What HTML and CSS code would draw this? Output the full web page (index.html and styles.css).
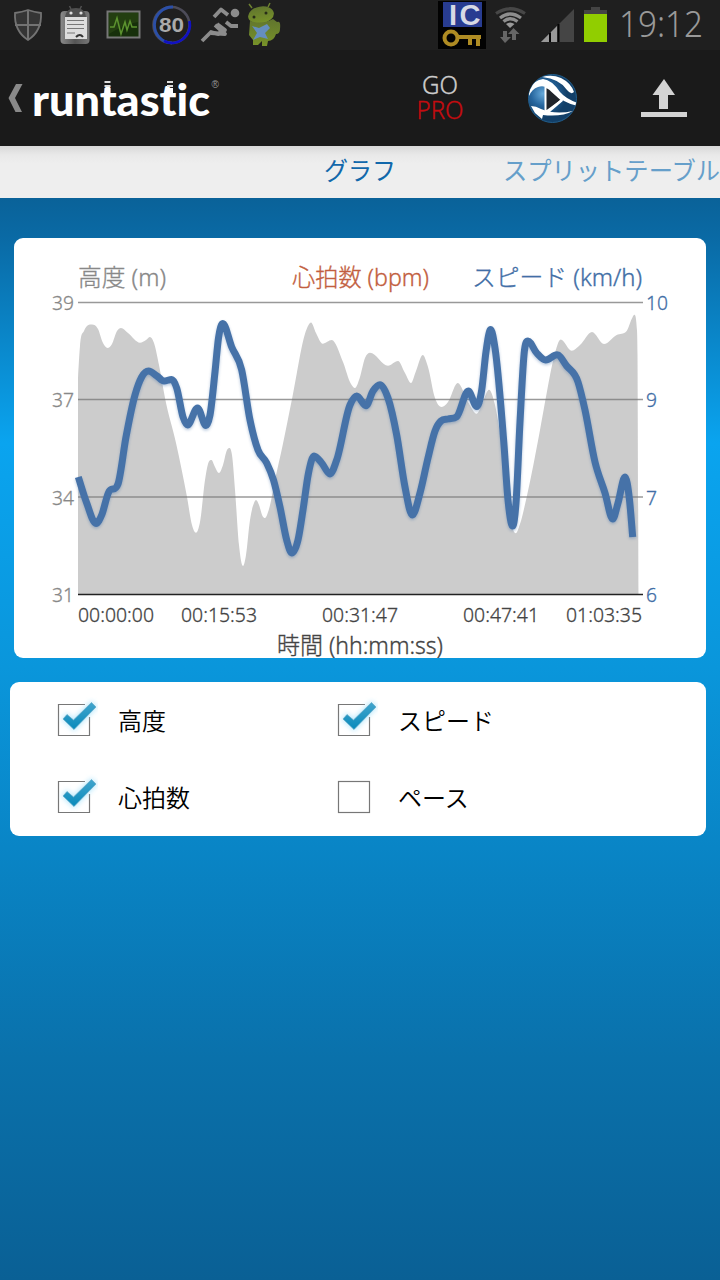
FILE: index.html
```html
<!DOCTYPE html>
<html lang="ja">
<head>
<meta charset="utf-8">
<title>runtastic</title>
<link rel="stylesheet" href="styles.css">
</head>
<body>
<div class="screen">
  <div class="status">
    <svg class="status-icons" width="290" height="50" viewBox="0 0 290 50">
      <defs>
        <linearGradient id="robot" x1="0" y1="0" x2="0" y2="1"><stop offset="0" stop-color="#61752e"/><stop offset="1" stop-color="#789329"/></linearGradient>
        <linearGradient id="metal"><stop offset="0" stop-color="#8a8a8a"/><stop offset=".5" stop-color="#555"/><stop offset="1" stop-color="#777"/></linearGradient>
      </defs>
      <path d="M15 13Q22 12 28 10Q34 12 41 13Q42 31 28 40Q14 31 15 13Z" fill="#353535" stroke="#737373" stroke-width="1.8"/>
      <path d="M28 11V39M15 25H41" stroke="#737373" stroke-width="2"/>
      <rect x="60.500" y="11" width="29" height="33" rx="4" fill="url(#metal)"/>
      <path d="M65 17Q66 8 76 8Q85 8 86 17Z" fill="#505050"/>
      <path d="M71 9L69.500 6M80 9L81.500 6" stroke="#505050" stroke-width="1.500"/>
      <path d="M65 17H87V39H65Z" fill="#ddd"/>
      <circle cx="71" cy="13" r="1.600" fill="#ddd"/><circle cx="81" cy="13" r="1.600" fill="#ddd"/>
      <path d="M67 20.500H84M67 24.500H84M67 28.500H84M67 33H75" stroke="#777"/>
      <path d="M76 37Q80 33 83 37" stroke="#333" stroke-width="2" fill="none"/>
      <rect x="107.500" y="11.500" width="32" height="26" fill="#17300b" stroke="#777" stroke-width="2"/>
      <path d="M109 13H138V22Q125 24 109 34Z" fill="#294414" opacity=".7"/>
      <path d="M110 27H114L117 18L121 34L125 22L127 30L130 21L132 27H137" stroke="#5c932f" stroke-width="1.500" fill="none"/>
      <circle cx="171.500" cy="25" r="18" fill="none" stroke="#4c4b58" stroke-width="2.600"/>
      <path d="M173 7A18 18 0 1 0 172 43" fill="none" stroke="#2b4fa8" stroke-width="2.800"/>
      <path d="M189.500 21A18 18 0 0 1 164 41" fill="none" stroke="#1111c2" stroke-width="2.800"/>
      <text x="171.500" y="32" class="gauge" textLength="25" lengthAdjust="spacingAndGlyphs">80</text>
      <g fill="none" stroke="#8c8c8c" stroke-width="3.800" stroke-linejoin="round">
        <path d="M214 17L221 9.500L228 15"/><path d="M217 24L225 30L218 34L211 32L202 41"/><path d="M215 25L225 34L211 33"/><path d="M226 22L231 26H238"/>
      </g>
      <circle cx="235" cy="13" r="4.300" fill="#8c8c8c"/>
      <g fill="url(#robot)">
        <ellipse cx="261" cy="15" rx="13" ry="8.500" transform="rotate(-10 261 15)"/>
        <path d="M250 21Q262 25 273 19L277 22Q281 20 280 29Q280 34 276 34Q274 41 268 41L267 46H262V41L258 45H253V40L249 35Z"/>
        <path d="M252 8L249 4M268 7L270 3" stroke="#6d8130" stroke-width="1.500"/>
      </g>
      <circle cx="254" cy="17" r="1.500" fill="#272d18"/><circle cx="266" cy="13" r="1.500" fill="#272d18"/>
      <path d="M252 26L259 28L267 24L270 28L265 33L268 39L260 37L253 40L257 33Z" fill="#658ebe"/>
    </svg>
    <svg class="status-icons" width="182" height="50" viewBox="436 0 182 50">
      <rect x="438" y="1" width="48" height="48" fill="#020202"/>
      <rect x="443" y="2" width="39" height="25" fill="#283c91"/>
      <text x="449 459.500" y="25" class="ic">IC</text>
      <g fill="none" stroke="#ae8b23" stroke-width="4"><circle cx="451" cy="38" r="6.500"/><path d="M458 37H481M470 38V45M478 38V46"/></g>
      <g fill="none" stroke="#8d8d8d" stroke-width="3.200">
        <path d="M496 13.500Q510 4 525 13.500" stroke="#474747"/><path d="M500 18Q510 10 521 18"/><path d="M503.500 21.500Q510 16 517.500 21.500"/>
      </g>
      <path d="M506 24Q510 21 514.500 24L510 28Z" fill="#999"/>
      <path d="M503 31H507V37H511L505 43L500 37H503ZM512 40H516V34H519.500L513.500 28L508 34H512Z" fill="#666"/>
      <path d="M541 42L574 9V42Z" fill="#454545"/><path d="M541 42L549 34V42ZM551 42V32L557 26V42Z" fill="#999"/>
      <path d="M550 33V42M558.500 24V42" stroke="#050505" stroke-width="2"/>
      <path d="M584 15V10H591V7H600V10H607V15Z" fill="#444"/><rect x="584" y="14" width="23" height="28" fill="#91ce00"/>
    </svg>
    <svg class="clock" width="102" height="50" viewBox="618 0 102 50"><text x="619" y="37" textLength="84" lengthAdjust="spacingAndGlyphs">19:12</text></svg>
  </div>
  <header class="header">
    <svg class="brand" width="230" height="96" viewBox="0 50 230 96">
      <path d="M16 84H22.500L15 98L22 112H15.500L8.500 98Z" fill="#898989"/>
      <text x="32" y="115.500" class="logo" textLength="178" lengthAdjust="spacingAndGlyphs">runtastic</text>
      <path d="M104.500 82H110.500M104.500 86H110.500M167 82H173M167 86H173" stroke="#ddd" stroke-width="2"/>
      <path d="M104.500 88H110.500V96H104.500ZM167 88H173V96H167Z" fill="#fff"/>
      <text x="211.500" y="88" class="reg">®</text>
    </svg>
    <svg class="actions" width="320" height="96" viewBox="400 50 320 96">
      <defs>
        <radialGradient id="ball" cx=".3" cy=".4"><stop offset="0" stop-color="#65a8d9"/><stop offset=".5" stop-color="#26659d"/><stop offset="1" stop-color="#123f68"/></radialGradient>
        <clipPath id="ballClip"><circle cx="552.500" cy="98.500" r="24"/></clipPath>
      </defs>
      <text x="440" y="94" class="go" textLength="36" lengthAdjust="spacingAndGlyphs">GO</text>
      <text x="440" y="119" class="pro" textLength="47" lengthAdjust="spacingAndGlyphs">PRO</text>
      <circle cx="552.500" cy="98.500" r="24" fill="url(#ball)" stroke="#225e8c"/>
      <g clip-path="url(#ballClip)">
        <path d="M529 91Q533 80 543 79Q552 80 560 92Q566 99 578 103V106Q563 103 554 93Q546 84 538 87Q532 89 529 96Z" fill="#fff"/>
        <path d="M542 77Q552 74 561 78Q571 83 574 92Q571 95 567 90Q560 79 542 77Z" fill="#fff"/>
        <path d="M531 106Q536 106 541 109Q555 115 573 111Q562 117 543 115L542 119L535 113Z" fill="#fff"/>
        <path d="M545.500 87Q548 87 552 91L562 100L545.500 112Z" fill="#20242a" stroke="#fff" stroke-width="2"/>
        <path d="M548 112L562 100" stroke="#fff" stroke-width="2.500"/>
      </g>
      <path d="M664 79L675 95H668V109H659V95H652.500ZM641 112H687V117H641Z" fill="#d3d3d3"/>
    </svg>
  </header>
  <nav class="tabs">
    <svg width="720" height="52" viewBox="0 146 720 52">
      <text x="324" y="180" class="tab-on" textLength="72" lengthAdjust="spacingAndGlyphs">グラフ</text>
      <text x="503" y="180" class="tab-off" textLength="217" lengthAdjust="spacingAndGlyphs">スプリットテーブル</text>
    </svg>
  </nav>
  <main class="content">
    <section class="card chart-card">
      <svg class="chart" width="692" height="420" viewBox="14 238 692 420">
        <path id="altitude" class="altitude"/>
        <path class="grid" d="M78 302.500H643M78 399.500H643M78 497H643"/>
        <path class="axis" d="M78 594.500H643"/>
        <path id="speedGlow" class="speed-glow"/>
        <path id="speed" class="speed"/>
        <g class="unit">
          <text x="78" y="286" fill="#888" stroke="#888" textLength="88" lengthAdjust="spacingAndGlyphs">高度 (m)</text>
          <text x="292" y="286" fill="#c25e40" stroke="#c25e40" textLength="137" lengthAdjust="spacingAndGlyphs">心拍数 (bpm)</text>
          <text x="472" y="286" fill="#426ea6" stroke="#426ea6" textLength="170" lengthAdjust="spacingAndGlyphs">スピード (km/h)</text>
          <text x="277" y="654" fill="#444" stroke="#444" textLength="166" lengthAdjust="spacingAndGlyphs">時間 (hh:mm:ss)</text>
        </g>
        <g class="tick" fill="#888" stroke="#888">
          <text x="52" y="310" textLength="22" lengthAdjust="spacingAndGlyphs">39</text>
          <text x="52" y="407" textLength="22" lengthAdjust="spacingAndGlyphs">37</text>
          <text x="52" y="505" textLength="22" lengthAdjust="spacingAndGlyphs">34</text>
          <text x="52" y="602" textLength="22" lengthAdjust="spacingAndGlyphs">31</text>
        </g>
        <g class="tick" fill="#426ea6" stroke="#426ea6">
          <text x="646" y="310" textLength="22" lengthAdjust="spacingAndGlyphs">10</text>
          <text x="646" y="407" textLength="11" lengthAdjust="spacingAndGlyphs">9</text>
          <text x="646" y="505" textLength="11" lengthAdjust="spacingAndGlyphs">7</text>
          <text x="646" y="602" textLength="11" lengthAdjust="spacingAndGlyphs">6</text>
        </g>
        <g class="tick" fill="#444" stroke="#444">
          <text x="78" y="622" textLength="76" lengthAdjust="spacingAndGlyphs">00:00:00</text>
          <text x="181" y="622" textLength="76" lengthAdjust="spacingAndGlyphs">00:15:53</text>
          <text x="322" y="622" textLength="76" lengthAdjust="spacingAndGlyphs">00:31:47</text>
          <text x="463" y="622" textLength="76" lengthAdjust="spacingAndGlyphs">00:47:41</text>
          <text x="566" y="622" textLength="76" lengthAdjust="spacingAndGlyphs">01:03:35</text>
        </g>
      </svg>
    </section>
    <section class="card options">
      <div class="option"><svg class="box" width="44" height="44" viewBox="0 0 44 44"><use href="#checked"/></svg><span>高度</span></div>
      <div class="option"><svg class="box" width="44" height="44" viewBox="0 0 44 44"><use href="#checked"/></svg><span>スピード</span></div>
      <div class="option"><svg class="box" width="44" height="44" viewBox="0 0 44 44"><use href="#checked"/></svg><span>心拍数</span></div>
      <div class="option"><svg class="box" width="44" height="44" viewBox="0 0 44 44"><rect x="4.500" y="7.500" width="31" height="31" fill="none" stroke="#777" stroke-width="1.200"/></svg><span>ペース</span></div>
    </section>
  </main>
</div>
<svg class="defs" width="0" height="0">
  <defs>
    <linearGradient id="tick" x1="0" y1="0" x2="0" y2="1"><stop offset="0" stop-color="#42a5cd"/><stop offset="1" stop-color="#088abb"/></linearGradient>
    <filter id="halo" x="-30%" y="-30%" width="160%" height="160%"><feGaussianBlur stdDeviation="2.500"/></filter>
    <g id="checked">
      <path d="M31 7.500H4.500V38.500H35.500V20" fill="none" stroke="#777" stroke-width="1.200"/>
      <path d="M9 22L13 17.500L19.500 23L37.500 5.500L42 10L20 32.500Z" fill="#7fd6fa" stroke="#9fe0fb" stroke-width="3" filter="url(#halo)" opacity=".6"/>
      <path d="M9 22L13 17.500L19.500 23L37.500 5.500L42 10L20 32.500Z" fill="url(#tick)" stroke="#63a9c5" stroke-width=".7"/>
    </g>
  </defs>
</svg>
<script src="chart.js"></script>
</body>
</html>
```

FILE: styles.css
```css
* { box-sizing: border-box; }
body { margin: 0; background: #0b6095; font-family: "Noto Sans", "Noto Sans CJK JP", sans-serif; }
svg { display: block; }
.screen { width: 720px; height: 1280px; display: flex; flex-direction: column; overflow: hidden; }
.status { height: 50px; background: #1f1f1f; display: flex; flex: none; }
.status-icons:nth-child(2) { margin-left: 146px; }
.clock text { font-family: "Noto Sans", sans-serif; font-weight: 300; font-size: 36px; fill: #999; }
.gauge { font: 700 21px "Liberation Sans", sans-serif; fill: #aaa; text-anchor: middle; }
.ic { font: 700 29px "Liberation Sans", sans-serif; fill: #d7d9e5; }
.header { height: 96px; background: #1a1a1a; display: flex; justify-content: space-between; flex: none; }
.logo { font-family: Lato, sans-serif; font-weight: 900; font-size: 44px; fill: #fff; font-variant-ligatures: none; }
.reg { font: 10px "Liberation Sans", sans-serif; fill: #999; }
.go, .pro { font-size: 25px; font-weight: 300; text-anchor: middle; fill: #ccc; stroke: #ccc; stroke-width: .35; }
.pro { fill: #c40c10; stroke: #c40c10; }
.tabs { height: 52px; flex: none; background: linear-gradient(#d8d8d8, #e9e9e9 9px, #eee 18px); }
.tab-on, .tab-off { font-family: "Noto Sans CJK JP", sans-serif; font-size: 25px; fill: #1268ab; }
.tab-off { fill: #669fca; }
.content { flex: 1; display: flex; flex-direction: column; gap: 24px; padding: 40px 14px 0 10px; background: linear-gradient(#0a6299 0, #0a6aa5 40px, #0aa4ef 245px, #0a96db 470px, #0985c6 650px, #0a71ab 860px, #0a6095 1082px); }
.card { background: #fff; border-radius: 9px; overflow: hidden; flex: none; }
.chart-card { height: 420px; margin-left: 4px; }
.unit { font-size: 24px; font-weight: 300; stroke-width: .35; }
.tick { font-size: 20px; font-weight: 300; stroke-width: .3; }
.altitude { fill: #ccc; }
.grid { stroke: #777; stroke-opacity: .75; fill: none; stroke-width: 1.3; }
.axis { stroke: #222; stroke-width: 1.3; }
.speed { fill: none; stroke: #4672a8; stroke-width: 7; stroke-linejoin: round; }
.speed-glow { fill: none; stroke: #4672a8; stroke-width: 7; opacity: .4; filter: blur(1.5px); transform: translateY(1.5px); }
.options { height: 154px; display: grid; grid-template-columns: 280px 280px; grid-template-rows: 77px 77px; padding-left: 44px; }
.option { display: flex; align-items: center; gap: 20px; height: 77px; font-family: "Noto Sans CJK JP", sans-serif; font-size: 24px; font-weight: 350; color: #000; }
.box { margin-top: -3px; }
.option span { line-height: 36px; margin-top: -2px; }
.defs { position: absolute; }
```

FILE: chart.js
```js
const altitude = [[78,378],[80,346],[84,331],[92,324.5],[98,329],[103,343],[107.5,348],[112,344],[117,331],[121,328],[128,333],[140,342.700],[146,340],[150,337],[154,343],[159,365],[165,398],[176,443],[187,497],[192,525],[196,532.700],[200,522],[205,480],[208,464],[211.500,460],[215,467],[219,473],[223,465],[227,450],[229.500,448],[232,455],[235,490],[239,545],[243,566],[246,555],[250,520],[254,503],[256,500],[259,505],[262.500,516],[265,518],[269,509],[275,480],[282.700,445],[292,399],[306.700,329],[311,322.500],[316,333],[322.700,343.700],[331.700,340],[343,362],[351,384],[355,388],[360,377],[365,358],[370,352.700],[388,365.700],[398,361],[405,373],[411,383],[416,371],[422.700,355],[428,367],[435,398],[441.700,407],[448,402],[457.700,383],[468,402],[476.700,413.700],[483,401],[489,389.700],[495,405],[503,455],[511,522],[515.700,533.300],[520,524],[526.700,497],[540,430],[546.700,393],[554,357],[560.700,339.500],[571.700,350.700],[580,345],[592,332],[604,344],[616.700,335],[626.700,331],[631.700,319],[634.300,314.700],[636.700,327],[637.500,355],[638.500,594]];
const speed = [[78.300,477],[86.700,503],[96,523.500],[101.700,515],[108.300,493],[118,484],[126,437],[135,395],[141.700,377],[148.500,371],[157,376],[164,381],[171.700,379.500],[176.700,388],[183,417],[187.500,425],[197.500,408],[206,425.500],[210,415],[215,372],[218.500,338],[222.700,323.500],[231.700,347],[241.700,370],[250,420],[258,450],[266.700,463],[273.500,480],[280,507],[286.700,540],[291.700,553],[298,540],[303,510],[308.500,473],[314,456],[321.700,463],[330,474],[336.700,460],[350,405],[356.700,396],[366,405.700],[373,391],[380,384.700],[388,398],[396.700,435],[405,487],[412.300,515],[420,493],[428,458],[435,431],[441,421],[448,419],[456.700,416.700],[468.300,391],[476.700,406.500],[481.700,390],[486,351.700],[490.700,329.500],[495,348],[504,445],[508,500],[512.700,526],[516,503],[520,422],[524.500,350],[528,341],[536.700,353],[545.700,360],[557,354.800],[566.700,366],[578,382],[585,410],[595,462],[605,493],[612.700,519],[618,503],[625,477],[629.500,500],[632.700,537]];

// Monotone cubic interpolation through a list of [x, y] points.
function curve(p) {
  const n = p.length, s = [], m = [];
  for (let i = 0; i < n - 1; i++) s.push((p[i + 1][1] - p[i][1]) / (p[i + 1][0] - p[i][0]));
  m[0] = s[0];
  m[n - 1] = s[n - 2];
  for (let i = 1; i < n - 1; i++) {
    const a = s[i - 1], b = s[i];
    const h0 = p[i][0] - p[i - 1][0], h1 = p[i + 1][0] - p[i][0];
    const mean = Math.abs((a * h1 + b * h0) / (h0 + h1));
    m[i] = a * b <= 0 ? 0 : Math.sign(a) * Math.min(mean, 3 * Math.abs(a), 3 * Math.abs(b));
  }
  let d = `M${p[0]}`;
  for (let i = 0; i < n - 1; i++) {
    const h = (p[i + 1][0] - p[i][0]) / 3;
    d += `C${p[i][0] + h},${p[i][1] + m[i] * h} ${p[i + 1][0] - h},${p[i + 1][1] - m[i + 1] * h} ${p[i + 1]}`;
  }
  return d;
}

document.getElementById('altitude').setAttribute('d', curve(altitude) + 'L78,594Z');
document.getElementById('speed').setAttribute('d', curve(speed));
document.getElementById('speedGlow').setAttribute('d', curve(speed));
```
